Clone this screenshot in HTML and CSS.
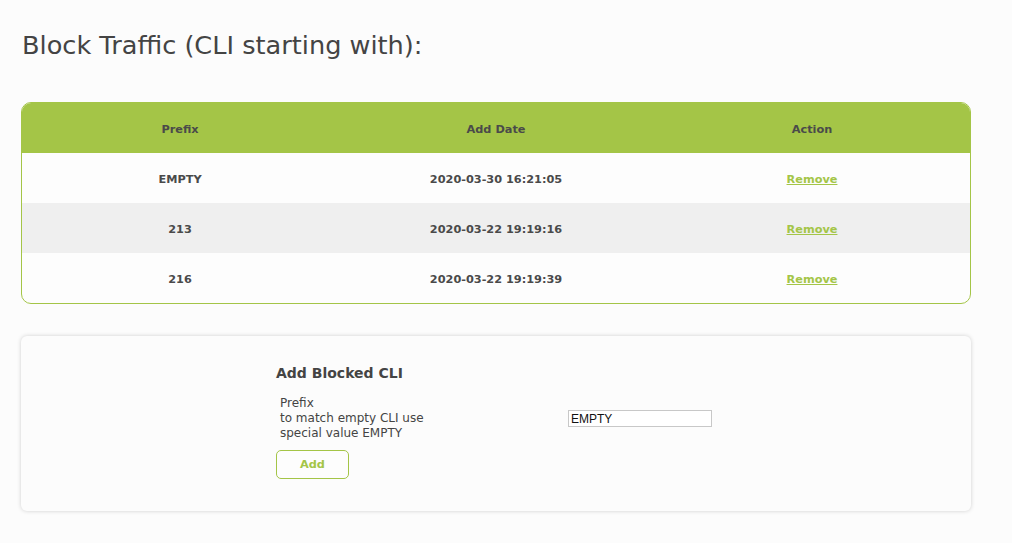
FILE: index.html
```html
<!DOCTYPE html>
<html>
<head>
<meta charset="utf-8">
<link rel="stylesheet" href="styles.css">
</head>
<body>
<div class="page">
  <h1 class="title">Block Traffic (CLI starting with):</h1>
  <div class="list">
    <div class="row head">
      <div class="cell">Prefix</div>
      <div class="cell">Add Date</div>
      <div class="cell">Action</div>
    </div>
    <div class="row">
      <div class="cell">EMPTY</div>
      <div class="cell">2020-03-30 16:21:05</div>
      <div class="cell"><a class="link" href="#">Remove</a></div>
    </div>
    <div class="row alt">
      <div class="cell">213</div>
      <div class="cell">2020-03-22 19:19:16</div>
      <div class="cell"><a class="link" href="#">Remove</a></div>
    </div>
    <div class="row">
      <div class="cell">216</div>
      <div class="cell">2020-03-22 19:19:39</div>
      <div class="cell"><a class="link" href="#">Remove</a></div>
    </div>
  </div>
  <div class="card">
    <div class="form">
      <div class="form-title">Add Blocked CLI</div>
      <div class="field">
        <div class="label">Prefix<br>to match empty CLI use<br>special value EMPTY</div>
        <input class="input" type="text" value="EMPTY">
      </div>
      <button class="btn" type="button">Add</button>
    </div>
  </div>
</div>
</body>
</html>
```
FILE: styles.css
```css
html, body {
  margin: 0;
  padding: 0;
  background: #fcfcfc;
}
body {
  font-family: "DejaVu Sans", Verdana, sans-serif;
  color: #444;
}
.page {
  width: 950px;
  padding: 30px 0 40px 21px;
}
.title {
  margin: 0 0 0 1px;
  font-size: 25.6px;
  font-weight: normal;
  line-height: 30px;
  color: #444;
}
.list {
  margin-top: 42px;
  border: 1px solid #a4c547;
  border-radius: 10px;
  overflow: hidden;
  background: #fdfdfd;
}
.row {
  display: grid;
  grid-template-columns: 1fr 1fr 1fr;
  height: 50px;
  box-sizing: border-box;
  padding-top: 3px;
  align-items: center;
  font-size: 11.3px;
  font-weight: bold;
  color: #4a4a4a;
}
.row.head {
  background: #a4c547;
}
.row.alt {
  background: #efefef;
}
.cell {
  text-align: center;
}
.link {
  color: #a4c547;
  text-decoration: underline;
}
.card {
  margin-top: 32px;
  height: 175px;
  background: #fcfcfc;
  border-radius: 6px;
  box-shadow: 0 0 4px rgba(0,0,0,0.18);
  display: flex;
  justify-content: center;
}
.form {
  width: 440px;
  padding-top: 28px;
}
.form-title {
  font-size: 14px;
  font-weight: bold;
  color: #444;
  line-height: 18px;
}
.field {
  display: flex;
  margin-top: 14px;
  padding-left: 4px;
}
.label {
  width: 288px;
  font-size: 12px;
  line-height: 15px;
  color: #444;
}
.input {
  margin-top: 14px;
  width: 144px;
  height: 17px;
  box-sizing: border-box;
  border: 1px solid #c8c8c8;
  padding: 0 2px;
  font-family: "Liberation Sans", Arial, sans-serif;
  font-size: 12px;
  color: #111;
  background: #fff;
  outline: none;
}
.btn {
  margin-top: 9px;
  width: 73px;
  height: 29px;
  border: 1px solid #a4c547;
  border-radius: 5px;
  background: #fdfdfd;
  color: #a4c547;
  font-family: "DejaVu Sans", sans-serif;
  font-weight: bold;
  font-size: 11.3px;
}
```
